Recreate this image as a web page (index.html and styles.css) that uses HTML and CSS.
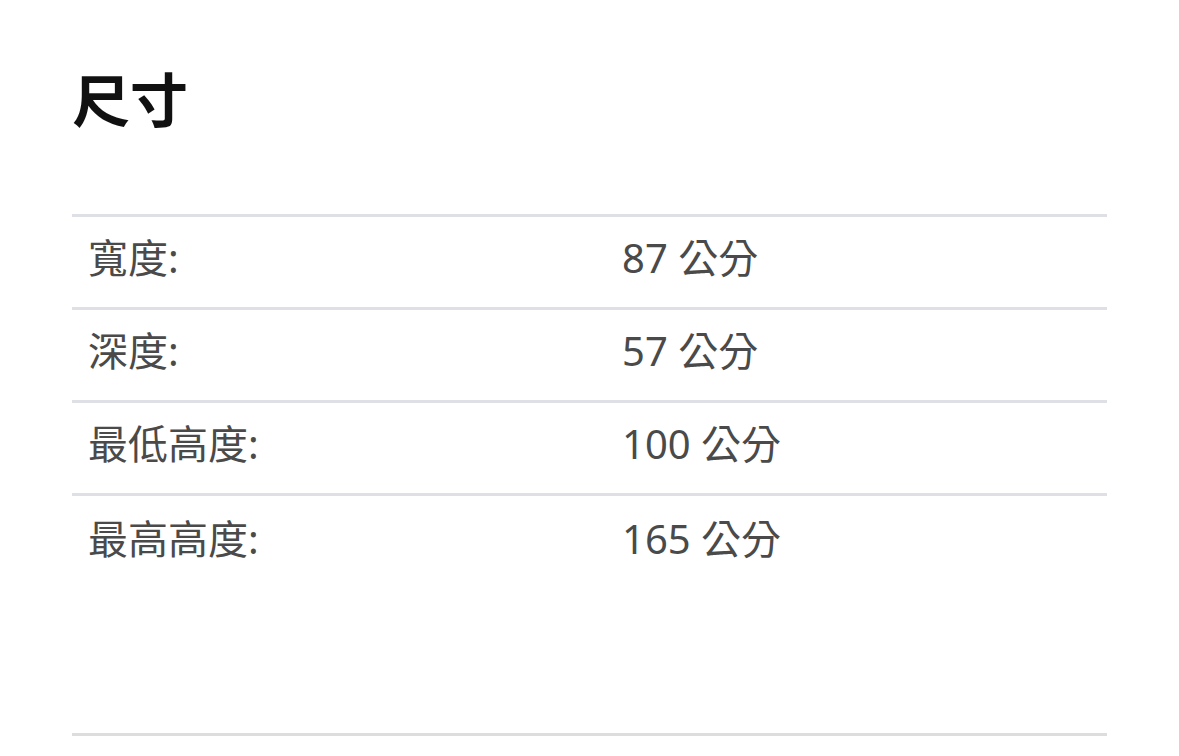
FILE: index.html
```html
<!DOCTYPE html>
<html lang="zh-Hant">
<head>
<meta charset="utf-8">
<link rel="stylesheet" href="styles.css">
</head>
<body>
<main class="page">
  <h2 class="title">尺寸</h2>
  <div class="specs">
    <div class="row"><div class="label">寬度:</div><div class="value">87 公分</div></div>
    <div class="row"><div class="label">深度:</div><div class="value">57 公分</div></div>
    <div class="row"><div class="label">最低高度:</div><div class="value">100 公分</div></div>
    <div class="row"><div class="label">最高高度:</div><div class="value">165 公分</div></div>
  </div>
  <div class="divider"></div>
</main>
</body>
</html>
```
FILE: styles.css
```css
html, body {
  margin: 0;
  padding: 0;
  background: #ffffff;
}
body {
  font-family: "Noto Sans", "Noto Sans CJK TC", sans-serif;
  color: #4a4a4a;
}
.page {
  width: 1035px;
  margin-left: 72px;
  padding-top: 62px;
}
.title {
  margin: 0;
  font-size: 58px;
  line-height: 76px;
  font-weight: 700;
  color: #111111;
}
.specs {
  margin-top: 76px;
  border-top: 3px solid #dfe0e6;
}
.row {
  display: grid;
  grid-template-columns: 534px 1fr;
  height: 93px;
  box-sizing: border-box;
  padding-bottom: 12px;
  align-items: center;
  border-bottom: 3px solid #dfe0e6;
  font-size: 40px;
}
.row:last-child {
  border-bottom: none;
}
.label, .value {
  padding-left: 16px;
}
.divider {
  margin-top: 144px;
  border-top: 3px solid #dddddd;
}
```
